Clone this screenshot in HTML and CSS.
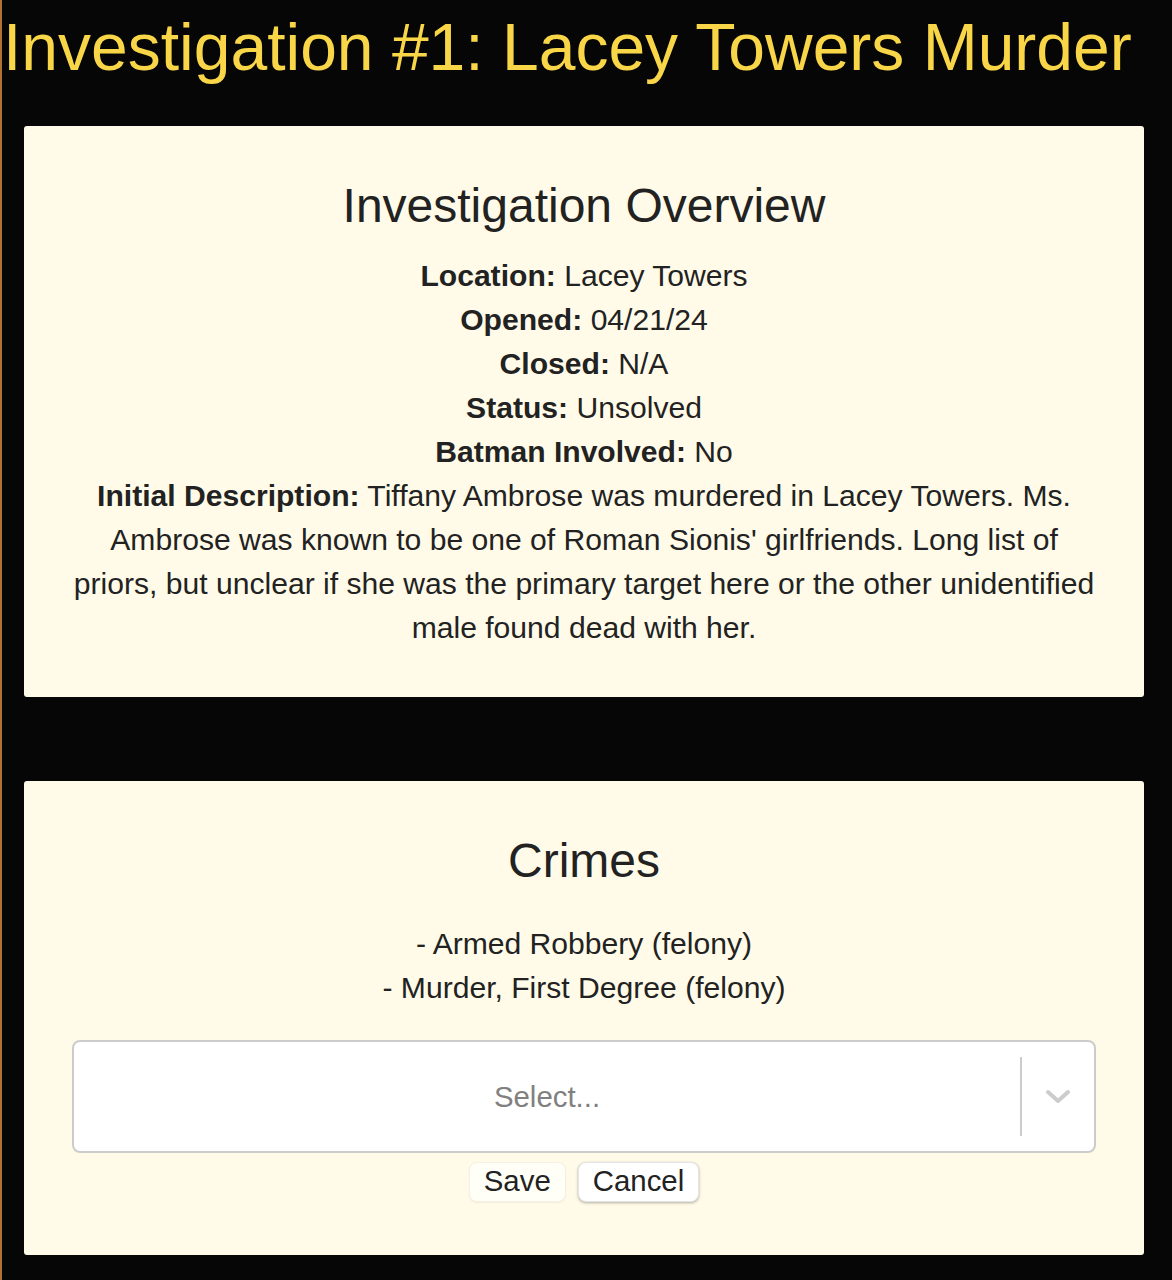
FILE: index.html
```html
<!DOCTYPE html>
<html lang="en">
<head>
<meta charset="utf-8">
<title>Investigation #1: Lacey Towers Murder</title>
<link rel="stylesheet" href="styles.css">
</head>
<body>
<h1 class="title">Investigation #1: Lacey Towers Murder</h1>
<div class="page">
  <section class="card">
    <h2 class="card-heading">Investigation Overview</h2>
    <div class="details">
      <p><b>Location:</b> Lacey Towers</p>
      <p><b>Opened:</b> 04/21/24</p>
      <p><b>Closed:</b> N/A</p>
      <p><b>Status:</b> Unsolved</p>
      <p><b>Batman Involved:</b> No</p>
      <p><b>Initial Description:</b> Tiffany Ambrose was murdered in Lacey Towers. Ms. Ambrose was known to be one of Roman Sionis' girlfriends. Long list of priors, but unclear if she was the primary target here or the other unidentified male found dead with her.</p>
    </div>
  </section>

  <section class="card card-crimes">
    <h2 class="card-heading">Crimes</h2>
    <ul class="crime-list">
      <li>- Armed Robbery (felony)</li>
      <li>- Murder, First Degree (felony)</li>
    </ul>
    <div class="select">
      <div class="select-value">Select...</div>
      <div class="select-indicators">
        <span class="select-sep"></span>
        <span class="select-arrow">
          <svg width="26" height="16" viewBox="0 0 26 16"><path d="M3 3 L13 12 L23 3" fill="none" stroke="#cccccc" stroke-width="4" stroke-linecap="round" stroke-linejoin="round"/></svg>
        </span>
      </div>
    </div>
    <div class="actions">
      <button class="btn btn-save" type="button">Save</button>
      <button class="btn btn-cancel" type="button">Cancel</button>
    </div>
  </section>
</div>
</body>
</html>
```

FILE: styles.css
```css
html, body {
  margin: 0;
  padding: 0;
}
body {
  background: #060606;
  font-family: "Liberation Sans", Arial, Helvetica, sans-serif;
  color: #222;
  border-left: 2px solid #b0722e;
  min-height: 1280px;
  box-sizing: border-box;
}
.title {
  margin: 0 0 0 1px;
  padding-top: 10px;
  font-size: 66px;
  font-weight: 400;
  line-height: 75px;
  color: #f8d648;
  white-space: nowrap;
}
.page {
  padding: 0 28px 40px 22px;
}
.card {
  background: #fffbe8;
  border-radius: 3px;
  margin-top: 41px;
  padding: 52px 48px 47px;
  text-align: center;
}
.card-crimes {
  margin-top: 84px;
  padding-bottom: 53px;
}
.card-heading {
  margin: 0;
  font-size: 48px;
  font-weight: 400;
  line-height: 55px;
  color: #222;
}
.details {
  margin-top: 21px;
  font-size: 30.1px;
  line-height: 44px;
}
.details p {
  margin: 0;
}
.details b {
  font-weight: 700;
}
.crime-list {
  list-style: none;
  margin: 34px 0 0;
  padding: 0;
  font-size: 30.1px;
  line-height: 44px;
}
.select {
  margin-top: 30px;
  height: 113px;
  box-sizing: border-box;
  border: 2px solid #cccccc;
  border-radius: 8px;
  background: #fff;
  display: flex;
  align-items: center;
}
.select-value {
  flex: 1;
  text-align: center;
  font-size: 29.4px;
  color: #808080;
}
.select-indicators {
  display: flex;
  align-items: center;
  align-self: stretch;
}
.select-sep {
  width: 2px;
  align-self: stretch;
  margin: 15px 0;
  background: #cccccc;
}
.select-arrow {
  width: 72px;
  display: flex;
  justify-content: center;
  align-items: center;
}
.select-arrow svg {
  display: block;
}
.actions {
  margin-top: 9px;
  display: flex;
  justify-content: center;
  gap: 12px;
}
.btn {
  font-family: "Liberation Sans", Arial, Helvetica, sans-serif;
  font-size: 29.4px;
  line-height: 34px;
  color: #222;
  border: 1px solid transparent;
  border-radius: 8px;
  padding: 1px 14px 3px;
  margin: 0;
  cursor: pointer;
}
.btn-save {
  background: #fffef7;
  border-color: #f6f2e2;
  box-shadow: 0 1px 2px rgba(0, 0, 0, 0.06);
}
.btn-cancel {
  background: #ffffff;
  border-color: #e4e4e4;
  box-shadow: 0 1px 3px rgba(0, 0, 0, 0.3);
}
```
